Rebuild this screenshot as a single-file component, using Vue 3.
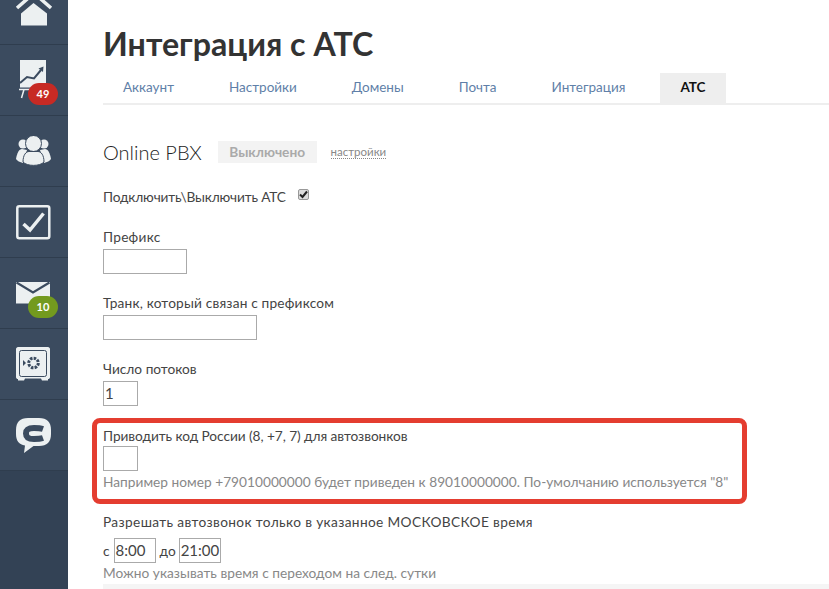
<script setup>
const tabs = [
  { label: 'Аккаунт' },
  { label: 'Настройки' },
  { label: 'Домены' },
  { label: 'Почта' },
  { label: 'Интеграция' },
  { label: 'АТС', active: true },
]
</script>

<template>
  <div class="page">
    <aside class="sidebar">
      <div class="nav nav-first">
        <svg width="68" height="44" viewBox="0 0 68 44">
          <path class="fill" d="M21 13.500 L33.500 3 L47 13.500 V25.500 H21 Z" />
          <path class="stroke" d="M17 8 L34 -7 L51 8" />
        </svg>
      </div>
      <div class="nav">
        <svg width="36" height="44" viewBox="16 58 36 44">
          <rect class="fill" x="20" y="60" width="26" height="27.500" />
          <path class="dark" d="M20 83 L27 77 L34 78.500 L41 70" />
          <path class="dark-fill" d="M38.500 68.500 L43.500 66.500 L43 72 Z" />
          <path class="thin" d="M19 89.500 H30 M24 89.500 L21.500 98" />
        </svg>
        <span class="badge red">49</span>
      </div>
      <div class="nav">
        <svg width="36" height="30" viewBox="16 136 36 30">
          <circle class="fill" cx="23" cy="144" r="4.500" />
          <circle class="fill" cx="44" cy="144" r="4.500" />
          <path class="fill" d="M16 159 C17 153 19 149 22 149 L27 150 L23 163 C20 162 17 161 16 159 Z" />
          <path class="fill" d="M51 159 C50 153 48 149 45 149 L40 150 L44 163 C47 162 50 161 51 159 Z" />
          <circle class="fill edge" cx="33.500" cy="143.500" r="8" />
          <path class="fill edge" d="M23 162 C23 155 26 151.500 29 151.500 H38 C41 151.500 44 155 44 162 C40 166.500 27 166.500 23 162 Z" />
        </svg>
      </div>
      <div class="nav">
        <svg width="36" height="36" viewBox="16 204 36 36">
          <rect class="frame" x="17.300" y="206.300" width="32" height="32" rx="2" />
          <path class="check" d="M23.500 224 L30 230 L43.500 213.500" />
        </svg>
      </div>
      <div class="nav">
        <svg width="36" height="36" viewBox="16 275 36 36">
          <rect class="fill" x="16" y="282" width="34" height="21.500" />
          <path class="envelope-flap" d="M16.500 282.500 L33 292.500 L49.500 282.500" />
        </svg>
        <span class="badge green">10</span>
      </div>
      <div class="nav">
        <svg width="36" height="36" viewBox="16 346 36 36">
          <path class="fill" d="M18 347 H48 C49 347 50 348 50 349 V377 C50 378.500 49 379 48 379 V380.500 H42 L41 378.500 H25 L24 380.500 H18 V379 C17 379 16 378.500 16 377 V349 C16 348 17 347 18 347 Z" />
          <rect class="inner" x="19.500" y="350.500" width="27" height="26" rx="2" />
          <circle class="gear" cx="33.500" cy="363" r="4.800" />
          <path class="dark-fill" d="M23 360 L26 363 L23 366 Z" />
        </svg>
      </div>
      <div class="nav">
        <svg width="36" height="36" viewBox="16 417 36 36">
          <path class="fill" d="M28 418 H39 C47 418 51 422 51 430 V434 C51 442 47 446 39 446 H33.500 L24 453 L25 445.500 C19 444.500 16 441 16 434 V430 C16 422 20 418 28 418 Z" />
          <path class="logo-c" d="M43 429 C41 428.300 38 428 34 428 C28 428 26 430 26 433.500 C26 437 28 439 34 439 C38 439 41 438.700 43 438" />
        </svg>
      </div>
      <div class="nav-rest"></div>
    </aside>

    <main class="content">
      <h1 class="title">Интеграция с АТС</h1>

      <nav class="tabs">
        <a v-for="t in tabs" :key="t.label" class="tab" :class="{ active: t.active }">{{ t.label }}</a>
      </nav>

      <div class="head">
        <span class="pbx">Online PBX</span>
        <span class="status">Выключено</span>
        <a class="settings">настройки</a>
      </div>

      <div class="toggle">
        <span class="toggle-text">Подключить\Выключить АТС</span>
        <span class="checkbox">
          <svg width="9" height="9" viewBox="0 0 9 9"><path d="M1 4.500 L3.500 7 L8 1.500" /></svg>
        </span>
      </div>

      <div class="field f-prefix">
        <label>Префикс</label>
        <div class="input w84"></div>
      </div>

      <div class="field f-trunk">
        <label>Транк, который связан с префиксом</label>
        <div class="input w154"></div>
      </div>

      <div class="field f-threads">
        <label>Число потоков</label>
        <div class="input w35">1</div>
      </div>

      <div class="callout">
        <label>Приводить код России (8, +7, 7) для автозвонков</label>
        <div class="input w35"></div>
        <p class="hint">Например номер +79010000000 будет приведен к 89010000000. По-умолчанию используется "8"</p>
      </div>

      <div class="field f-time">
        <label>Разрешать автозвонок только в указанное МОСКОВСКОЕ время</label>
        <div class="time">
          <span class="from">с</span>
          <div class="input w42">8:00</div>
          <span class="to">до</span>
          <div class="input w42">21:00</div>
        </div>
        <p class="hint">Можно указывать время с переходом на след. сутки</p>
      </div>

      <div class="strip"></div>
    </main>
  </div>
</template>

<style>
html, body { margin: 0; overflow: hidden; }
</style>

<style scoped>
.page {
  display: flex;
  width: 829px;
  height: 589px;
  overflow: hidden;
  background: #fff;
  font-family: Lato, "Open Sans", sans-serif;
  font-size: 13.7px;
  color: #444;
}

.sidebar {
  flex: 0 0 68px;
  display: flex;
  flex-direction: column;
  background: #3b4b5f;
}
.nav {
  position: relative;
  flex: 0 0 71px;
  box-sizing: border-box;
  display: flex;
  align-items: center;
  justify-content: center;
  border-bottom: 1px solid #2f3d4e;
}
.nav-first { flex-basis: 45px; align-items: flex-start; }
.nav-rest { flex: 1; background: #334255; }

.fill { fill: #ecf0f1; }
.edge { stroke: #3b4b5f; stroke-width: 1; }
.stroke { fill: none; stroke: #ecf0f1; stroke-width: 3.500; }
.dark { fill: none; stroke: #3b4b5f; stroke-width: 2; }
.dark-fill { fill: #3b4b5f; }
.thin { fill: none; stroke: #ecf0f1; stroke-width: 1.500; }
.frame { fill: none; stroke: #ecf0f1; stroke-width: 2.500; }
.check { fill: none; stroke: #ecf0f1; stroke-width: 3.500; }
.envelope-flap { fill: none; stroke: #3b4b5f; stroke-width: 2.200; }
.inner { fill: none; stroke: #3b4b5f; stroke-width: 1; }
.gear { fill: none; stroke: #3b4b5f; stroke-width: 3; stroke-dasharray: 2.500 1.200; }
.logo-c { fill: none; stroke: #3b4b5f; stroke-width: 6; }

.badge {
  position: absolute;
  top: 38px;
  left: 28px;
  width: 30px;
  height: 22px;
  border-radius: 11px;
  color: #fff;
  font-size: 11px;
  font-weight: 700;
  line-height: 22px;
  text-align: center;
}
.badge.red { background: #c72a24; }
.badge.green { background: #739a1e; }

.content {
  flex: 1;
  min-width: 0;
  padding-left: 35px;
}
.title {
  margin: 24px 0 0;
  font-size: 32.2px;
  line-height: 40px;
  font-weight: 700;
  color: #333;
}
.tabs {
  display: flex;
  gap: 15px;
  height: 30px;
  margin-top: 9px;
  border-bottom: 2px solid #eee;
}
.tab {
  padding: 0 20px;
  font-size: 13.5px;
  line-height: 28px;
  color: #5f7fa8;
}
.tab.active {
  background: #eee;
  color: #111;
  font-weight: 700;
}

.head {
  display: flex;
  align-items: center;
  height: 22px;
  margin-top: 36px;
}
.pbx { font-size: 20px; color: #222; font-weight: 300; }
.status {
  margin-left: 16px;
  padding: 0 11.500px;
  line-height: 22px;
  background: #f3f3f3;
  color: #aaa;
  font-weight: 700;
}
.settings {
  margin-left: 14px;
  font-size: 11.5px;
  color: #888;
  border-bottom: 1px dotted #888;
}

.toggle {
  display: flex;
  align-items: center;
  height: 20px;
  margin-top: 23px;
}
.toggle-text { letter-spacing: -0.16px; }
.checkbox {
  display: inline-flex;
  align-items: center;
  justify-content: center;
  box-sizing: border-box;
  width: 11px;
  height: 11px;
  margin-left: 12px;
  margin-top: -3px;
  background: #ddd;
  border: 1px solid #999;
  border-radius: 2px;
}
.checkbox svg { fill: none; stroke: #222; stroke-width: 2; }

label { display: block; line-height: 18px; }
.input {
  box-sizing: border-box;
  height: 25px;
  padding-left: 1px;
  border: 1px solid #aaa;
  font-size: 15px;
  line-height: 23px;
  color: #444;
}
.w84 { width: 84px; }
.w154 { width: 154px; }
.w35 { width: 35px; }
.w42 { width: 42px; }

.field { display: block; }
.f-prefix { margin-top: 22px; }
.f-prefix label { letter-spacing: 0.25px; }
.f-trunk { margin-top: 20px; }
.f-trunk label { letter-spacing: 0.18px; }
.f-threads { margin-top: 20px; }
.f-prefix label, .f-trunk label, .f-threads label { margin-bottom: 3px; }

.callout {
  box-sizing: border-box;
  width: 655px;
  height: 86px;
  margin: 12px 0 0 -11px;
  padding: 4px 0 0 6px;
  border: 5px solid #e43d30;
  border-radius: 8px;
}
.callout label { margin-bottom: 1px; letter-spacing: -0.06px; }
.hint { margin: 2px 0 0; line-height: 18px; color: #888; letter-spacing: 0.02px; }

.f-time { margin-top: 9px; }
.f-time label { letter-spacing: 0.36px; }
.time {
  display: flex;
  align-items: center;
  gap: 3px;
  margin-top: 7px;
}
.time .from { margin-right: 1px; }
.time .to { margin-left: 1px; }
.f-time .hint { margin-top: 1px; }

.strip {
  height: 10px;
  margin-top: 2px;
  background: #f5f5f5;
}
</style>
